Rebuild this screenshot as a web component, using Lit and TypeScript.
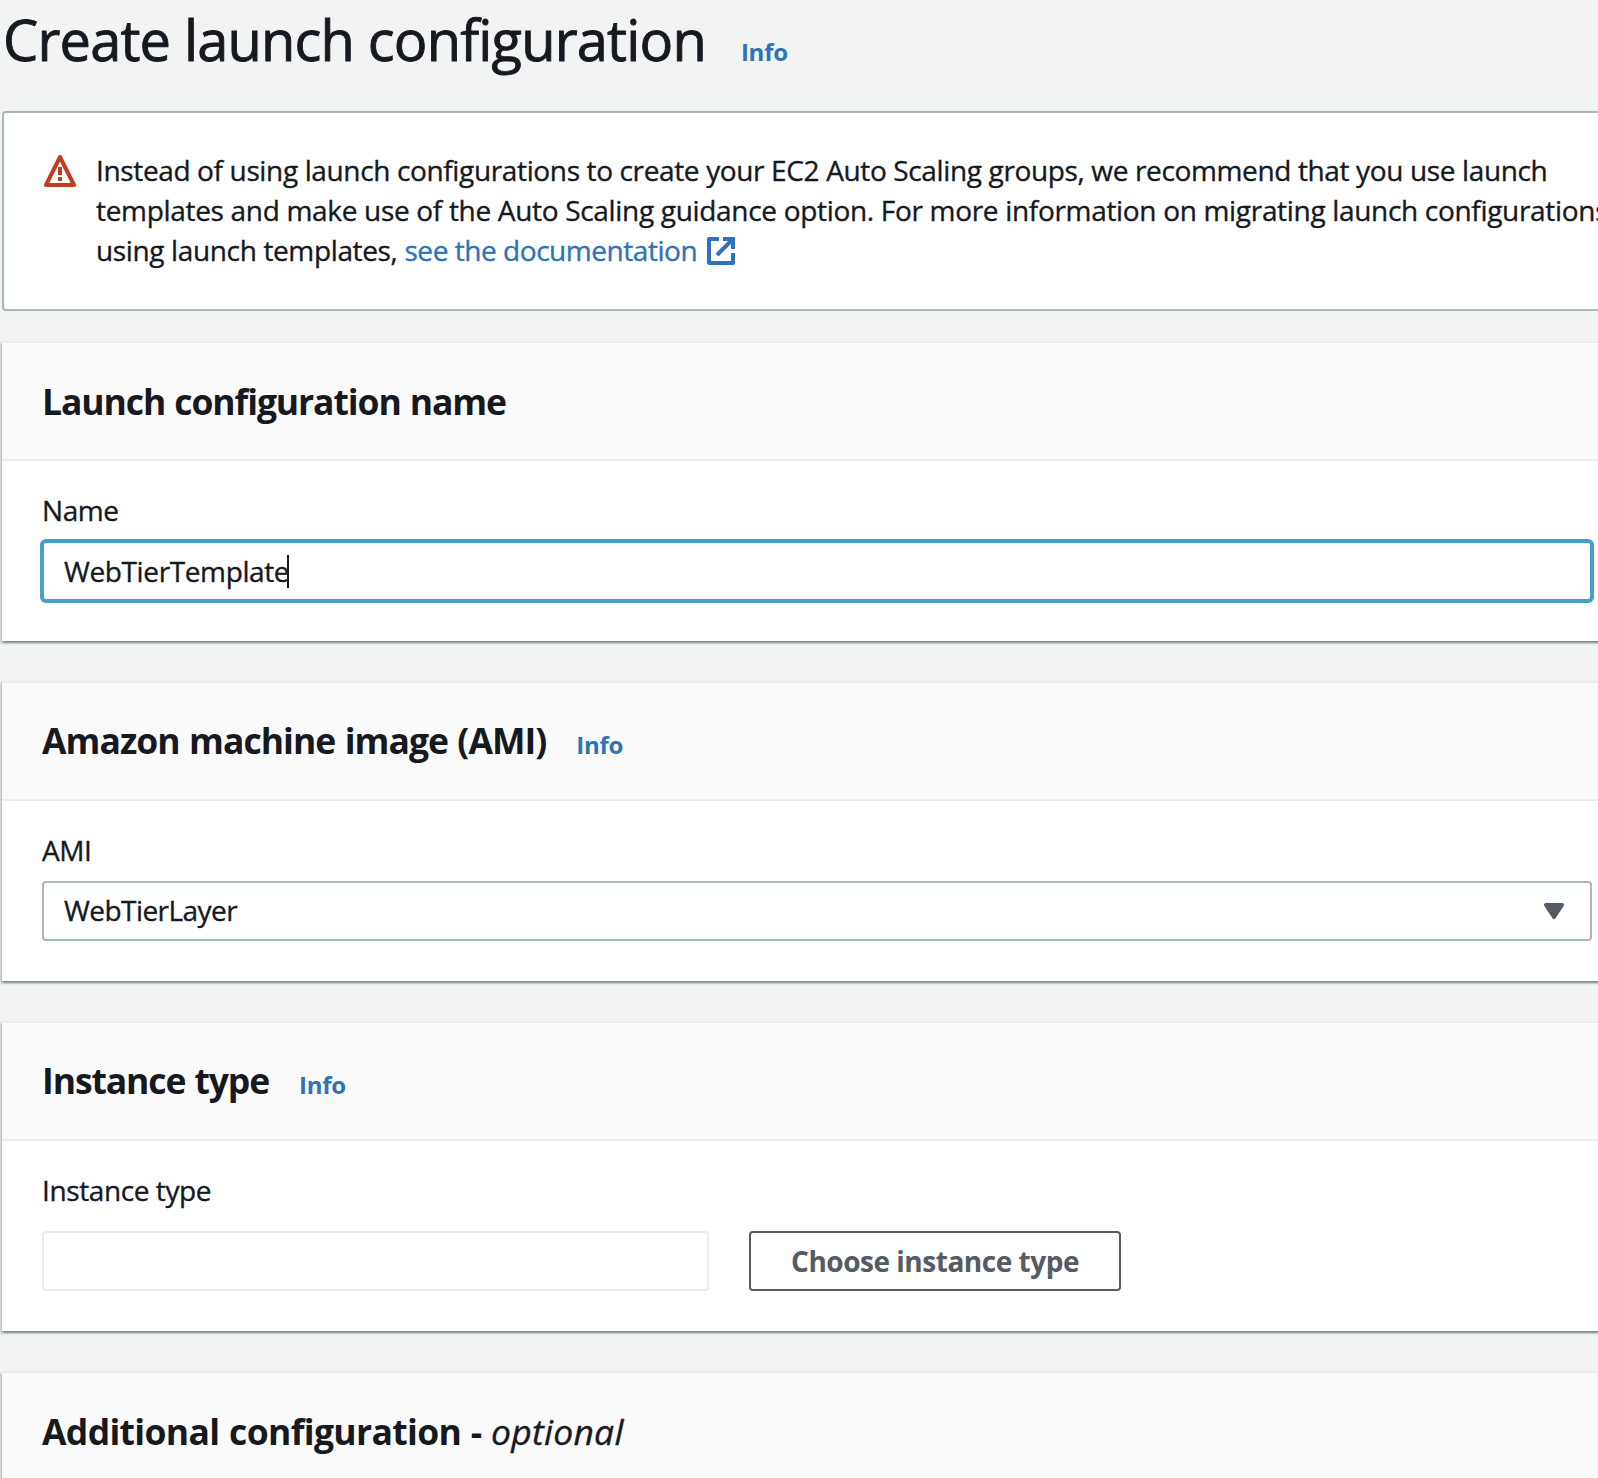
import { LitElement, html, css, svg } from "lit";
import { customElement, property } from "lit/decorators.js";

const base = css`
  :host {
    display: block;
    box-sizing: border-box;
    font-family: "Open Sans", "Noto Sans", sans-serif;
    font-size: 28px;
    line-height: 40px;
    color: #16191f;
    -webkit-text-stroke: 0.35px currentColor;
  }
  *,
  *::before,
  *::after {
    box-sizing: border-box;
  }
  svg {
    display: block;
    width: 32px;
    height: 32px;
    flex: none;
  }
  .info {
    font-size: 24px;
    font-weight: 700;
    letter-spacing: -0.25px;
    color: #2e73b8;
    text-decoration: none;
    -webkit-text-stroke: 0;
  }
`;

const warningIcon = svg`<svg viewBox="0 0 16 16" fill="none" stroke="#c13d20" stroke-width="2">
  <path d="M8 1l7 14H1z" stroke-linejoin="round"></path>
  <path d="M8 6v4M8 11v2"></path>
</svg>`;

const externalIcon = svg`<svg viewBox="0 0 16 16" fill="none" stroke="#2e73b8" stroke-width="2">
  <path d="M14 9v5H2V2h5" stroke-linejoin="round"></path>
  <path d="M9 2h5v5M6 10l8-8"></path>
</svg>`;

const caretDownIcon = svg`<svg viewBox="0 0 16 16" fill="#545b64" stroke="#545b64" stroke-width="2">
  <path d="M4 5h8l-4 6z" stroke-linejoin="round"></path>
</svg>`;

@customElement("config-panel")
class ConfigPanel extends LitElement {
  @property() heading = "";
  @property() optional = "";
  @property({ type: Boolean }) info = false;
  @property({ type: Number }) tracking = -1.1;

  static styles = [
    base,
    css`
      :host {
        background: #fff;
        border-top: 2px solid #eaeded;
        box-shadow: 0 2px 2px 0 rgba(0, 28, 36, 0.3), 2px 2px 2px 0 rgba(0, 28, 36, 0.15),
          -2px 2px 2px 0 rgba(0, 28, 36, 0.15);
      }
      .header {
        display: flex;
        align-items: center;
        height: 118px;
        padding: 0 40px;
        background: #fafafa;
        border-bottom: 2px solid #eaeded;
      }
      .title {
        display: flex;
        align-items: baseline;
        gap: 30px;
      }
      h2 {
        margin: 0;
        font-size: 35.5px;
        line-height: 44px;
        font-weight: 700;
        word-spacing: 1px;
        white-space: nowrap;
        -webkit-text-stroke: 0;
      }
      .optional {
        font-weight: 400;
        letter-spacing: 0.25px;
        -webkit-text-stroke: 0.35px currentColor;
      }
      .body {
        padding: 29px 40px 40px;
      }
    `,
  ];

  render() {
    return html`
      <div class="header">
        <div class="title">
          <h2 style="letter-spacing: ${this.tracking}px">${this.heading}${this.optional
              ? html` - <i class="optional">${this.optional}</i>`
              : ""}</h2>
          ${this.info ? html`<a class="info">Info</a>` : ""}
        </div>
      </div>
      <div class="body"><slot></slot></div>
    `;
  }
}

@customElement("app-root")
class AppRoot extends LitElement {
  static styles = [
    base,
    css`
      :host {
        height: 1478px;
        overflow: hidden;
        background: #f2f3f3;
      }
      .page {
        width: 1632px;
        padding-left: 2px;
      }
      .top {
        display: flex;
        align-items: baseline;
        gap: 35px;
        height: 111px;
        padding-top: 3px;
      }
      h1 {
        margin: 0 0 0 1px;
        font-size: 56px;
        line-height: 72px;
        font-weight: 400;
        letter-spacing: -0.82px;
        -webkit-text-stroke: 0.9px currentColor;
      }
      .alert {
        display: flex;
        gap: 20px;
        height: 200px;
        padding: 37px 40px 0;
        background: #fff;
        border: 2px solid #aab7b8;
        border-radius: 4px;
        letter-spacing: -0.36px;
        white-space: nowrap;
      }
      .alert > svg {
        margin-top: 5px;
      }
      .second {
        letter-spacing: -0.315px;
      }
      .last {
        display: flex;
      }
      .link {
        display: flex;
        gap: 8px;
        margin-left: 7px;
        color: #2e73b8;
        letter-spacing: -0.45px;
      }
      .link svg {
        margin-top: 5px;
      }
      .panels {
        display: flex;
        flex-direction: column;
        gap: 40px;
        margin-top: 30px;
      }
      .label {
        letter-spacing: -0.4px;
      }
      .control {
        display: flex;
        align-items: center;
        width: 1550px;
        height: 60px;
        margin-top: 11px;
        padding: 0 20px;
        border: 2px solid #aab7b8;
        border-radius: 4px;
        background: #fff;
        letter-spacing: -0.55px;
      }
      .focused {
        border-color: #44a0c8;
        box-shadow: 0 0 0 2px #44a0c8;
        letter-spacing: -0.38px;
      }
      .cursor {
        width: 2px;
        height: 33px;
        margin-left: -2px;
        background: #16191f;
      }
      .select {
        justify-content: space-between;
      }
      .select span {
        padding-bottom: 2px;
      }
      .row {
        display: flex;
        gap: 40px;
        margin-top: 21px;
      }
      .row .control {
        width: 667px;
        margin: 0;
        border-color: #eaeded;
      }
      button {
        width: 372px;
        height: 60px;
        padding: 0;
        border: 2px solid #545b64;
        border-radius: 4px;
        background: #fff;
        color: #545b64;
        font: 700 28px/40px "Open Sans", "Noto Sans", sans-serif;
        letter-spacing: -0.48px;
        -webkit-text-stroke: 0;
      }
    `,
  ];

  render() {
    return html`
      <div class="page">
        <div class="top">
          <h1>Create launch configuration</h1>
          <a class="info">Info</a>
        </div>
        <div class="alert">
          ${warningIcon}
          <div>
            <div>Instead of using launch configurations to create your EC2 Auto Scaling groups, we recommend that you use launch</div>
            <div class="second">templates and make use of the Auto Scaling guidance option. For more information on migrating launch configurations</div>
            <div class="last">
              using launch templates,<a class="link">see the documentation ${externalIcon}</a>
            </div>
          </div>
        </div>
        <div class="panels">
          <config-panel heading="Launch configuration name">
            <div class="label">Name</div>
            <div class="control focused"><span>WebTierTemplate</span><span class="cursor"></span></div>
          </config-panel>
          <config-panel heading="Amazon machine image (AMI)" tracking="-0.95" info>
            <div class="label">AMI</div>
            <div class="control select"><span>WebTierLayer</span>${caretDownIcon}</div>
          </config-panel>
          <config-panel heading="Instance type" info>
            <div class="label">Instance type</div>
            <div class="row">
              <div class="control"></div>
              <button>Choose instance type</button>
            </div>
          </config-panel>
          <config-panel heading="Additional configuration" tracking="-0.66" optional="optional"></config-panel>
        </div>
      </div>
    `;
  }
}
